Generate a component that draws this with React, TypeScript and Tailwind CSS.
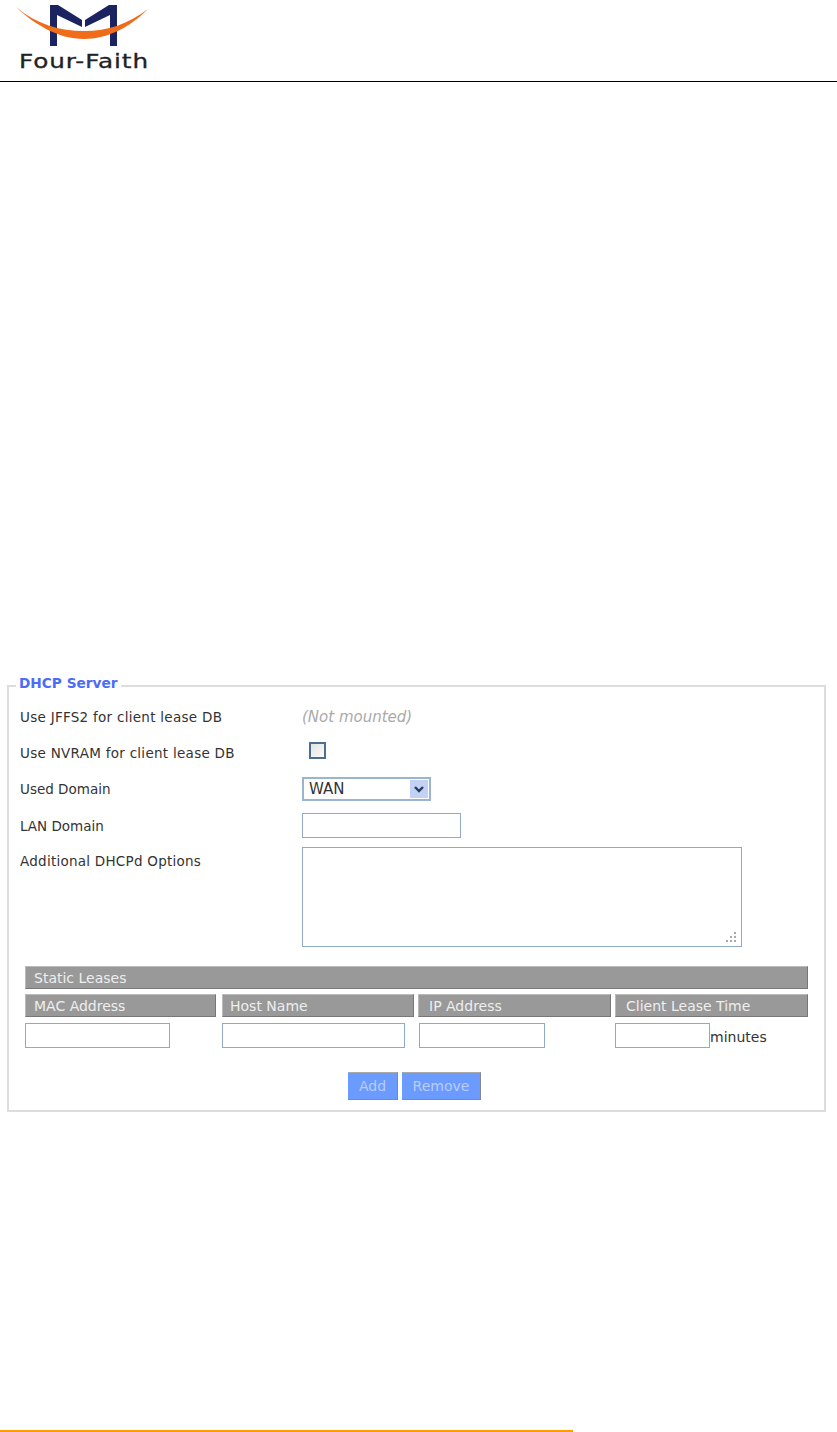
import React from "react";

function Logo() {
  return (
    <div className="relative w-[170px] h-[72px]">
      <svg width="170" height="72" viewBox="0 0 170 72" className="absolute left-0 top-0">
        <path d="M50 5 L58 5 L82 20 L82 27 L57 15 L57 46 L50 46 Z" fill="#1b2460" />
        <path d="M117 5 L109 5 L85 20 L85 27 L110 15 L110 46 L117 46 Z" fill="#1b2460" />
        <path d="M16 7 C34 24 58 39 84 39 C108 39 130 27 148 9 C128 24 108 31 84 31 C60 31 36 24 16 7 Z" fill="#ef6c1a" />
      </svg>
      <span className="absolute left-[19px] top-[49px] origin-left scale-x-[1.3] text-[19px] leading-[24px] tracking-[0.7px] text-[#222] [-webkit-text-stroke:0.3px_#222] font-['DejaVu_Sans',sans-serif] whitespace-nowrap">
        Four-Faith
      </span>
    </div>
  );
}

function Row({ label, className, labelClass, children }: { label: string; className: string; labelClass?: string; children: React.ReactNode }) {
  return (
    <div className={`flex ${className}`}>
      <div className={`w-[282px] shrink-0 text-[13.5px] leading-[18px] text-[#333] ${labelClass ?? ""}`}>{label}</div>
      {children}
    </div>
  );
}

const inputCls = "block border border-[#8fa9c6] h-[25px] bg-white";
const headCls = "h-[23px] bg-[#999] border border-[#bbb] border-r-[#777] border-b-[#777] text-[14px] leading-[22px] text-[#eee]";

export default function App() {
  return (
    <div className="w-[837px] h-[1432px] bg-white flex flex-col font-['DejaVu_Sans',sans-serif] overflow-hidden">
      <header className="h-[82px] shrink-0 border-b border-black">
        <Logo />
      </header>

      <fieldset className="mt-[593px] ml-[7px] mr-[11px] h-[437px] border-2 border-[#ddd] pl-[11px] pr-[16px] min-w-0">
        <legend className="-ml-[4px] px-[3px] pb-[6px] text-[13.7px] leading-[16px] font-bold text-[#4a6cf7]">DHCP Server</legend>

        <Row label="Use JFFS2 for client lease DB" labelClass="tracking-[0.28px]" className="mt-[11px] items-center h-[18px]">
          <span className="italic text-[15px] text-[#aaa]">(Not mounted)</span>
        </Row>

        <Row label="Use NVRAM for client lease DB" labelClass="tracking-[0.28px]" className="mt-[18px] items-center h-[18px]">
          <span className="ml-[7px] mb-[6px] block w-[17px] h-[17px] border-2 border-[#4a6f8f] bg-gradient-to-br from-[#e4e4df] to-[#fafafa]" />
        </Row>

        <Row label="Used Domain" className="mt-[15px] items-center h-[24px]">
          <div className="w-[129px] h-[24px] border-2 border-[#9bb5d0] flex items-center justify-between pl-[5px] pr-[1px] text-[15px] text-[#333]">
            <span>WAN</span>
            <span className="w-[18px] h-[18px] bg-[#c3d2f4] flex items-center justify-center">
              <svg width="12" height="9" viewBox="0 0 12 9">
                <path d="M2 2 L6 6 L10 2" fill="none" stroke="#2a3a60" strokeWidth="2.4" />
              </svg>
            </span>
          </div>
        </Row>

        <Row label="LAN Domain" className="mt-[12px] items-center h-[25px]">
          <div className={`${inputCls} w-[159px]`} />
        </Row>

        <Row label="Additional DHCPd Options" labelClass="tracking-[0.25px] pt-[5px]" className="mt-[9px] items-start">
          <div className="relative w-[440px] h-[100px] border border-[#8fa9c6] bg-white">
            <svg width="14" height="14" viewBox="0 0 14 14" className="absolute right-[3px] bottom-[2px]">
              <g fill="#aaa">
                <rect x="10" y="2" width="2" height="2" />
                <rect x="6" y="6" width="2" height="2" />
                <rect x="10" y="6" width="2" height="2" />
                <rect x="2" y="10" width="2" height="2" />
                <rect x="6" y="10" width="2" height="2" />
                <rect x="10" y="10" width="2" height="2" />
              </g>
            </svg>
          </div>
        </Row>

        <div className="mt-[19px] ml-[5px] w-[783px]">
          <div className="h-[23px] bg-[#999] border border-[#bbb] border-r-[#777] border-b-[#777] pl-[8px] text-[14px] leading-[22px] text-[#eee]">
            Static Leases
          </div>
          <div className="mt-[5px] grid grid-cols-[197px_196px_197px_193px]">
            <div className={`${headCls} mr-[6px] pl-[8px]`}>MAC Address</div>
            <div className={`${headCls} mr-[4px] pl-[7px]`}>Host Name</div>
            <div className={`${headCls} mr-[4px] pl-[10px]`}>IP Address</div>
            <div className={`${headCls} pl-[10px]`}>Client Lease Time</div>
          </div>
          <div className="mt-[6px] grid grid-cols-[197px_197px_196px_193px]">
            <div className={`${inputCls} w-[145px]`} />
            <div className={`${inputCls} w-[183px]`} />
            <div className={`${inputCls} w-[126px]`} />
            <div className="flex items-center">
              <div className={`${inputCls} w-[95px]`} />
              <span className="pt-[3px] text-[14px] text-[#333]">minutes</span>
            </div>
          </div>
        </div>

        <div className="mt-[24px] flex justify-center gap-[4px]">
          <div className="w-[50px] h-[28px] bg-[#6b9bff] border border-[#6b9bff] border-r-[#888] border-b-[#888] border-t-[#aaa] text-center text-[14px] leading-[26px] text-[#b9cdf5]">Add</div>
          <div className="w-[79px] h-[28px] bg-[#6b9bff] border border-[#6b9bff] border-r-[#888] border-b-[#888] border-t-[#aaa] text-center text-[14px] leading-[26px] text-[#b9cdf5]">Remove</div>
        </div>
      </fieldset>

      <div className="mt-auto h-[2px] w-[573px] bg-[#ff9c00]" />
    </div>
  );
}
